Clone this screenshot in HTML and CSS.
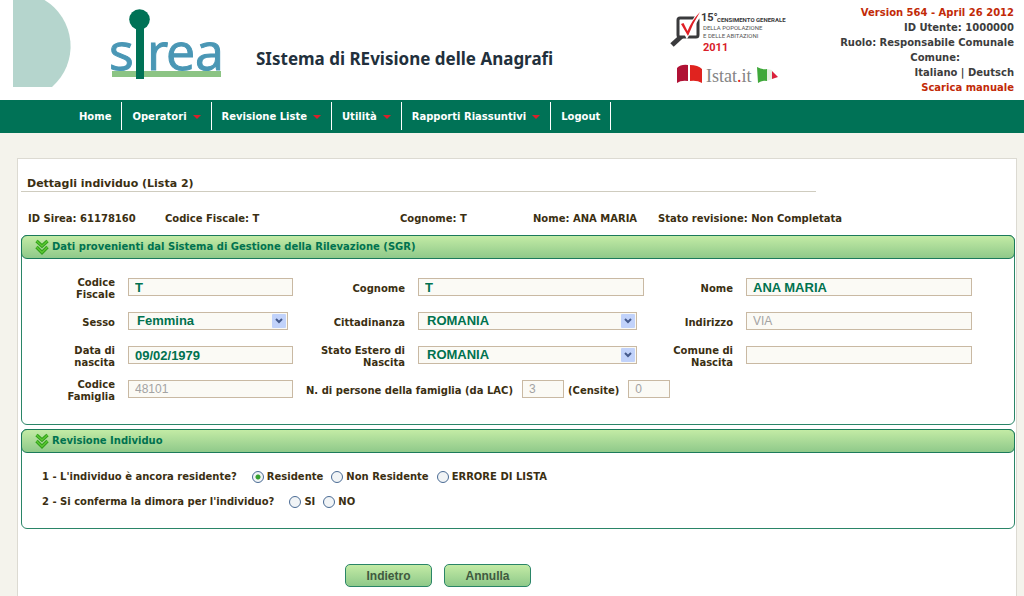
FILE: index.html
```html
<!DOCTYPE html>
<html lang="it">
<head>
<meta charset="utf-8">
<title>SIREA - Dettagli individuo</title>
<link rel="stylesheet" href="styles.css">
</head>
<body>
<header class="header">
  <svg class="brand" width="232" height="88" viewBox="0 0 232 88" role="img" aria-label="sirea">
    <path d="M13 0H44.500A54 54 0 0 1 52 87H13Z" fill="#b5d5cd"/>
    <rect x="112" y="71" width="109" height="6" fill="#8cc484"/>
    <text class="brand-text" x="109" y="70">s</text>
    <text class="brand-text" x="147 166 195" y="70">rea</text>
    <circle cx="139.500" cy="19.500" r="10.300" fill="#007256"/>
    <rect x="136" y="20" width="8" height="59" fill="#007256"/>
  </svg>
  <h1 class="app-title">SIstema di REvisione delle Anagrafi</h1>
  <div class="partners">
    <svg width="120" height="46" viewBox="0 0 120 46" role="img" aria-label="15° Censimento generale">
      <path d="M15 30L3 41" stroke="#3a3a3c" stroke-width="5"/>
      <rect x="9" y="14" width="20" height="19" rx="2" fill="#fff" stroke="#3a3a3c" stroke-width="3"/>
      <path d="M13 20L18 30L30 10" fill="none" stroke="#fff" stroke-width="5"/>
      <path d="M12 20L14.500 19L18.500 27Q23 16 31 8Q24 19 19 32Z" fill="#df1f26"/>
      <text class="census-num" x="32" y="17">15°</text>
      <text class="census-bold" x="48" y="18">CENSIMENTO GENERALE</text>
      <text class="census-text" x="34" y="26">DELLA POPOLAZIONE</text>
      <text class="census-text" x="34" y="34">E DELLE ABITAZIONI</text>
      <text class="census-year" x="34" y="47">2011</text>
    </svg>
    <svg width="120" height="28" viewBox="0 0 120 28" role="img" aria-label="Istat.it">
      <path d="M8 8Q12 4 19 5V21Q12 20 8 23Z" fill="#b01235"/>
      <path d="M21 5Q29 5 33 9V23Q28 20 21 21Z" fill="#e0231f"/>
      <text class="istat" x="37" y="22">Istat<tspan fill="#e0231f">.</tspan>it</text>
      <path d="M88 7Q93 10 98 9V21Q93 20 89 23Z" fill="#3fa83a"/>
      <path d="M98 9L103 10V19L98 21Z" fill="#e4f0e2"/>
      <path d="M103 11L109 17L103 19Z" fill="#d9213b"/>
    </svg>
  </div>
  <div class="session">
    <span class="accent">Version 564 - April 26 2012</span>
    <span>ID Utente: 1000000</span>
    <span>Ruolo: Responsabile Comunale</span>
    <span class="comune">Comune:</span>
    <span><a href="#">Italiano</a> | <a href="#">Deutsch</a></span>
    <a class="accent" href="#">Scarica manuale</a>
  </div>
</header>

<nav class="nav">
  <a href="#">Home</a>
  <a class="drop" href="#">Operatori</a>
  <a class="drop" href="#">Revisione Liste</a>
  <a class="drop" href="#">Utilità</a>
  <a class="drop" href="#">Rapporti Riassuntivi</a>
  <a href="#">Logout</a>
</nav>

<main class="page">
  <h2 class="page-title">Dettagli individuo (Lista 2)</h2>
  <div class="summary">
    <span>ID Sirea: 61178160</span>
    <span>Codice Fiscale: T</span>
    <span>Cognome: T</span>
    <span>Nome: ANA MARIA</span>
    <span>Stato revisione: Non Completata</span>
  </div>

  <form>
    <section class="panel">
      <h3 class="panel-head">
        <svg class="chev" width="14" height="16" viewBox="0 0 14 16" aria-hidden="true"><path d="M1.500 2L7 7L12.500 2M1.500 8L7 13.500L12.500 8" fill="none" stroke="#2f9e1b" stroke-width="3.400"/><path d="M1.500 2L7 7L12.500 2M1.500 8L7 13.500L12.500 8" fill="none" stroke="#5cc832" stroke-width="1.400"/></svg>
        Dati provenienti dal Sistema di Gestione della Rilevazione (SGR)
      </h3>
      <div class="fields">
        <label for="cf">Codice<br>Fiscale</label><input class="box" id="cf" value="T">
        <label for="cognome">Cognome</label><input class="box" id="cognome" value="T">
        <label for="nome">Nome</label><input class="box" id="nome" value="ANA MARIA">

        <label for="sesso">Sesso</label><select class="box" id="sesso"><option>Femmina</option></select>
        <label for="citt">Cittadinanza</label><select class="box" id="citt"><option>ROMANIA</option></select>
        <label for="ind">Indirizzo</label><input class="box" id="ind" value="VIA" disabled>

        <label for="data">Data di<br>nascita</label><input class="box" id="data" value="09/02/1979">
        <label for="stato">Stato Estero di<br>Nascita</label><select class="box" id="stato"><option>ROMANIA</option></select>
        <label for="comune">Comune di<br>Nascita</label><input class="box" id="comune">

        <label for="fam">Codice<br>Famiglia</label><input class="box" id="fam" value="48101" disabled>
        <div class="family">
          <label for="lac">N. di persone della famiglia (da LAC)</label><input class="box small" id="lac" value="3" disabled>
          <label for="cens">(Censite)</label><input class="box small" id="cens" value="0" disabled>
        </div>
      </div>
    </section>

    <section class="panel">
      <h3 class="panel-head">
        <svg class="chev" width="14" height="16" viewBox="0 0 14 16" aria-hidden="true"><path d="M1.500 2L7 7L12.500 2M1.500 8L7 13.500L12.500 8" fill="none" stroke="#2f9e1b" stroke-width="3.400"/><path d="M1.500 2L7 7L12.500 2M1.500 8L7 13.500L12.500 8" fill="none" stroke="#5cc832" stroke-width="1.400"/></svg>
        Revisione Individuo
      </h3>
      <div class="questions">
        <div class="question" role="radiogroup" aria-labelledby="q1">
          <span class="ask" id="q1">1 - L'individuo è ancora residente?</span>
          <label><input type="radio" name="res" checked>Residente</label>
          <label><input type="radio" name="res">Non Residente</label>
          <label><input type="radio" name="res">ERRORE DI LISTA</label>
        </div>
        <div class="question" role="radiogroup" aria-labelledby="q2">
          <span class="ask" id="q2">2 - Si conferma la dimora per l'individuo?</span>
          <label><input type="radio" name="dim">SI</label>
          <label><input type="radio" name="dim">NO</label>
        </div>
      </div>
    </section>

    <div class="actions">
      <button type="button">Indietro</button>
      <button type="button">Annulla</button>
    </div>
  </form>
</main>
</body>
</html>
```
FILE: styles.css
```css
* { box-sizing: border-box; }

html { height: 100%; }

body {
  margin: 0;
  min-height: 100%;
  display: flex;
  flex-direction: column;
  background: #f4f3ec;
  color: #3b2f12;
  font: bold 10px/12px "DejaVu Sans", Verdana, sans-serif;
}

a { color: inherit; text-decoration: none; }

.header {
  display: flex;
  align-items: flex-start;
  min-height: 100px;
  padding-right: 10px;
  background: #fff;
}

.brand { flex: none; }
.brand-text { font: 400 52px "Open Sans", sans-serif; fill: #4a97b5; stroke: #4a97b5; }

.app-title {
  margin: 0 auto 0 24px;
  padding-top: 48px;
  color: #22303c;
  font: 700 17px/22px "Noto Sans", sans-serif;
  white-space: nowrap;
}

.partners {
  display: flex;
  flex-direction: column;
  gap: 10px;
  padding-top: 4px;
}
.partners svg { overflow: visible; }
.census-num { font: bold 11px Roboto, sans-serif; fill: #3a3a3c; }
.census-bold { font: bold 6px Roboto, sans-serif; fill: #3a3a3c; }
.census-text { font: 6px Roboto, sans-serif; fill: #555; }
.census-year { font: bold 11px Roboto, sans-serif; fill: #d9202a; }
.istat { font: 18px "Liberation Serif", serif; fill: #858585; }

.session {
  display: flex;
  flex-direction: column;
  align-items: flex-end;
  min-width: 225px;
  padding-top: 5px;
  color: #3d3d3d;
  line-height: 15px;
}
.accent { color: #c22a07; }
.comune { padding-right: 54px; }

.nav {
  display: flex;
  padding: 2px 0 3px 69px;
  background: #007256;
  color: #fff;
}
.nav a {
  display: flex;
  align-items: center;
  gap: 6px;
  height: 28px;
  padding: 2px 10px 0;
  border-right: 1px solid #fff;
}
.drop::after {
  content: "";
  border: 4px solid transparent;
  border-top-color: #d9202a;
  border-bottom: 0;
}

.page {
  flex: 1;
  margin: 25px 7px 0 17px;
  padding: 18px 1px 9px 3px;
  background: #fff;
  border: 1px solid #dcdad2;
  border-bottom: 0;
}

.page-title {
  width: 80%;
  margin: 0;
  padding-left: 6px;
  border-bottom: 1px solid #cfccbf;
  font-size: 11px;
  line-height: 14px;
}

.summary {
  display: grid;
  grid-template-columns: 137fr 235fr 133fr 125fr 357fr;
  padding: 21px 0 10px 7px;
}

.panel {
  margin-bottom: 4px;
  border: 1px solid #2a8567;
  border-radius: 6px;
}
.panel-head {
  display: flex;
  align-items: center;
  gap: 3px;
  height: 24px;
  margin: -1px -1px 0;
  padding-left: 13px;
  border: 1px solid #1b7a5b;
  border-radius: 6px;
  background: linear-gradient(#c3eba5, #8fc98a);
  color: #00724f;
  font-size: 10px;
}

.fields {
  display: grid;
  grid-template-columns: 93fr 165fr 99fr 226fr 76fr 226fr;
  grid-auto-rows: minmax(24px, auto);
  column-gap: 13px;
  row-gap: 10px;
  padding: 18px 42px 21px 0;
}
.fields label {
  align-self: center;
  text-align: right;
  white-space: nowrap;
}

.box {
  width: 100%;
  min-width: 0;
  height: 18px;
  margin: 1px 0 0;
  padding: 0 6px;
  border: 1px solid #c9b9a3;
  border-radius: 0;
  background: #fbfaf5;
  color: #00724f;
  font: bold 13px/16px "Liberation Sans", Arial, sans-serif;
}
.box:disabled { color: #a3a3a3; font-size: 12px; font-weight: normal; }

select.box {
  width: 97%;
  padding-left: 8px;
  appearance: none;
  background: #fbfaf5 url("data:image/svg+xml,%3Csvg xmlns='http://www.w3.org/2000/svg' width='14' height='14'%3E%3Crect width='14' height='14' rx='1' fill='%23c1d2fa'/%3E%3Cpath d='M4 5l3 3 3-3' fill='none' stroke='%23455a8c' stroke-width='2'/%3E%3C/svg%3E") no-repeat right 1px center;
}

.family {
  grid-column: 3 / -1;
  display: flex;
  gap: 4px;
}
.small { width: 42px; }
.small + label { padding-right: 5px; }
.family label:first-child { padding-right: 5px; }

.questions {
  display: flex;
  flex-direction: column;
  gap: 9px;
  padding: 16px 20px 18px;
}
.question {
  display: flex;
  align-items: center;
  gap: 8px;
  height: 16px;
}
.ask { padding-right: 7px; }
.question label {
  display: flex;
  align-items: center;
  gap: 3px;
}
.question input {
  appearance: none;
  width: 12px;
  height: 12px;
  margin: 0;
  border: 1px solid #4a6b94;
  border-radius: 50%;
  background: #f1f4f6;
}
.question input:checked {
  background: radial-gradient(circle, #35a02f 0 2px, #f1f4f6 3px);
}

.actions {
  display: flex;
  gap: 12px;
  padding: 31px 0 0 324px;
}
.actions button {
  min-width: 87px;
  height: 23px;
  padding: 0;
  border: 1px solid #2a8567;
  border-radius: 5px;
  background: linear-gradient(#c3eba5, #8fc98a);
  color: #3f5a3f;
  font: bold 12px "Liberation Sans", Arial, sans-serif;
}
```
